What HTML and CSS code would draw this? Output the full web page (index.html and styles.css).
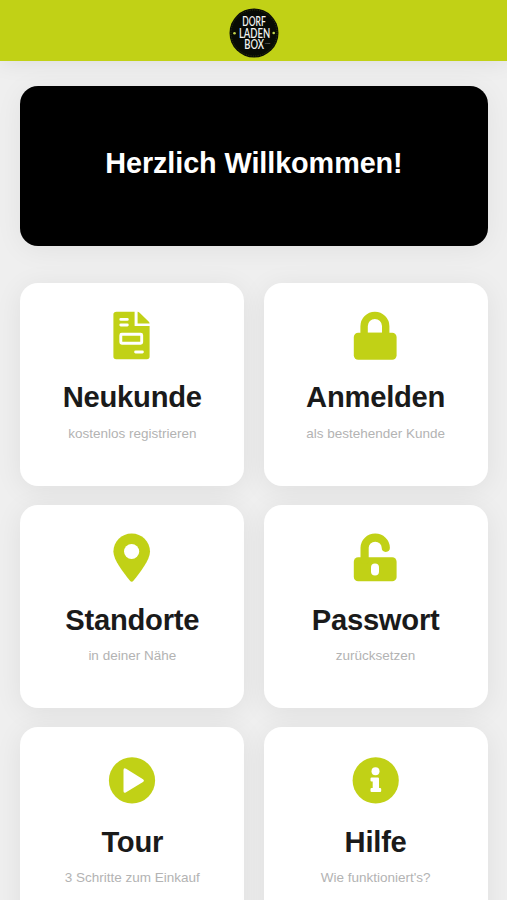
FILE: index.html
```html
<!DOCTYPE html>
<html lang="de">
<head>
<meta charset="utf-8">
<title>Dorfladenbox</title>
<link rel="stylesheet" href="styles.css">
</head>
<body>
<header class="topbar">
  <svg class="logo" viewBox="0 0 50 50" role="img" aria-label="Dorfladenbox">
    <circle cx="25" cy="25" r="24.5" fill="#080b05"/>
    <circle cx="25" cy="25" r="23" fill="none" stroke="#454d12" stroke-width=".7" stroke-dasharray="1 1.4"/>
    <g class="logo-text">
      <text x="13.2" y="18.4" textLength="23.5" lengthAdjust="spacingAndGlyphs">DORF</text>
      <text x="10" y="29.6" textLength="31.2" lengthAdjust="spacingAndGlyphs">LADEN</text>
      <text x="15.2" y="40.8" textLength="19.8" lengthAdjust="spacingAndGlyphs">BOX</text>
    </g>
    <text class="logo-small" x="35.6" y="35.6">.com</text>
    <circle cx="5.5" cy="25.3" r="1.3" fill="#c4d54c"/>
    <circle cx="44.7" cy="25" r="1.3" fill="#c4d54c"/>
  </svg>
</header>
<main class="content">
  <section class="hero"><h1>Herzlich Willkommen!</h1></section>
  <nav class="cards">
    <a class="card">
      <svg class="icon" viewBox="0 0 60 56">
        <path d="M14.5 4.7H32.6V19H47.6V49.5Q47.6 52.3 44.8 52.3H14.2Q11.4 52.3 11.4 49.5V7.5Q11.4 4.7 14.5 4.7Z"/>
        <path d="M35.6 4.7Q36.6 4.8 37.6 5.8L46.6 14.5Q47.6 15.5 47.6 16.4H35.6Z"/>
        <path class="cut-line" d="M18.8 12.4H25.3M18.8 18H25.3M33.6 45H40.4"/>
        <rect class="cut-line" x="18.8" y="27.2" width="20.9" height="9" rx="1"/>
      </svg>
      <h2>Neukunde</h2><p>kostenlos registrieren</p>
    </a>
    <a class="card">
      <svg class="icon" viewBox="0 0 60 56">
        <rect x="7.8" y="25.7" width="42.8" height="27" rx="4.4"/>
        <path d="M14.4 29V19.2A14.5 14.5 0 0 1 43.4 19.2V29H36V19A7.1 7.1 0 0 0 21.8 19V25.7H36V29Z"/>
      </svg>
      <h2>Anmelden</h2><p>als bestehender Kunde</p>
    </a>
    <a class="card">
      <svg class="icon" viewBox="0 0 60 56">
        <path d="M29.7 4.5C19.6 4.5 11.4 12.6 11.4 22.6C11.4 31 21.2 43.4 28 51.8Q29.7 53.8 31.4 51.8C38.2 43.4 48 31 48 22.6C48 12.6 39.8 4.5 29.7 4.5Z"/>
        <circle class="cut" cx="29.6" cy="22.5" r="7.6"/>
      </svg>
      <h2>Standorte</h2><p>in deiner Nähe</p>
    </a>
    <a class="card">
      <svg class="icon" viewBox="0 0 60 56">
        <rect x="7.8" y="28.3" width="42.8" height="24" rx="4.4"/>
        <path class="shackle" d="M18.6 31V18.8A10.6 10.2 0 0 1 39.8 18.8"/>
        <rect class="cut" x="25" y="34.4" width="8" height="12" rx="4"/>
      </svg>
      <h2>Passwort</h2><p>zurücksetzen</p>
    </a>
    <a class="card">
      <svg class="icon" viewBox="0 0 60 56">
        <circle cx="30" cy="28.4" r="23.1"/>
        <path class="cut" d="M21.5 18V39Q21.5 41.8 24.1 40.3L41 30Q42.9 28.6 41 27.2L24.1 16.7Q21.5 15.2 21.5 18Z"/>
      </svg>
      <h2>Tour</h2><p>3 Schritte zum Einkauf</p>
    </a>
    <a class="card">
      <svg class="icon" viewBox="0 0 60 56">
        <circle cx="29.7" cy="28.4" r="23.1"/>
        <circle class="cut" cx="29.5" cy="19.3" r="4"/>
        <path class="cut" d="M25.6 25.4H31.9Q33 25.4 33 26.5V36H34.1Q35.2 36 35.2 37.1V39Q35.2 40.1 34.1 40.1H25.6Q24.5 40.1 24.5 39V37.1Q24.5 36 25.6 36H26.7V29.6H25.6Q24.5 29.6 24.5 28.5V26.5Q24.5 25.4 25.6 25.4Z"/>
      </svg>
      <h2>Hilfe</h2><p>Wie funktioniert's?</p>
    </a>
  </nav>
</main>
</body>
</html>
```
FILE: styles.css
```css
* { box-sizing: border-box; }
html { height: 900px; overflow: hidden; }
body {
  margin: 0;
  height: 900px;
  overflow: hidden;
  background: #efefef;
  font-family: "Liberation Sans", Arial, sans-serif;
}
h1, h2, p { margin: 0; }
.topbar {
  height: 61.4px;
  padding-top: 8px;
  display: flex;
  justify-content: center;
  align-items: flex-start;
  background: #c1d116;
  box-shadow: 0 0 24px rgba(0, 0, 0, .09);
}
.logo { width: 50px; height: 50px; display: block; }
.logo-text {
  fill: #f4f4f2;
  font: 600 12.6px Lato, sans-serif;
}
.logo-small { fill: #aaa; font: 2.6px Lato, sans-serif; }
.content { padding: 24.7px 19.5px 0 20.4px; }
.hero {
  height: 159.5px;
  display: flex;
  justify-content: center;
  padding-top: 60px;
  border-radius: 18px;
  background: #000;
  color: #fff;
  box-shadow: 0 4px 28px rgba(0, 0, 0, .06);
}
.hero h1 { font-size: 28.8px; line-height: 34px; letter-spacing: -.08px; }
.cards {
  margin-top: 37px;
  display: grid;
  grid-template-columns: 1fr 1fr;
  grid-auto-rows: 203px;
  gap: 19.4px 19.5px;
}
.card {
  display: flex;
  flex-direction: column;
  align-items: center;
  padding-top: 24.5px;
  border-radius: 18px;
  background: #fff;
  box-shadow: 0 4px 28px rgba(0, 0, 0, .07);
}
.icon { width: 60px; height: 56px; flex: none; fill: #c1d116; }
.icon .cut { fill: #fff; }
.icon .cut-line {
  fill: none;
  stroke: #fff;
  stroke-width: 2.9;
  stroke-linecap: round;
}
.icon .shackle {
  fill: none;
  stroke: #c1d116;
  stroke-width: 8.2;
  stroke-linecap: round;
}
.card h2 {
  margin-top: 17.4px;
  font-size: 29.2px;
  line-height: 34px;
  letter-spacing: -.25px;
  color: #1a1a1a;
}
.card p {
  margin-top: 11.2px;
  font-size: 13.5px;
  line-height: 16px;
  color: #b3b3b3;
}
```
